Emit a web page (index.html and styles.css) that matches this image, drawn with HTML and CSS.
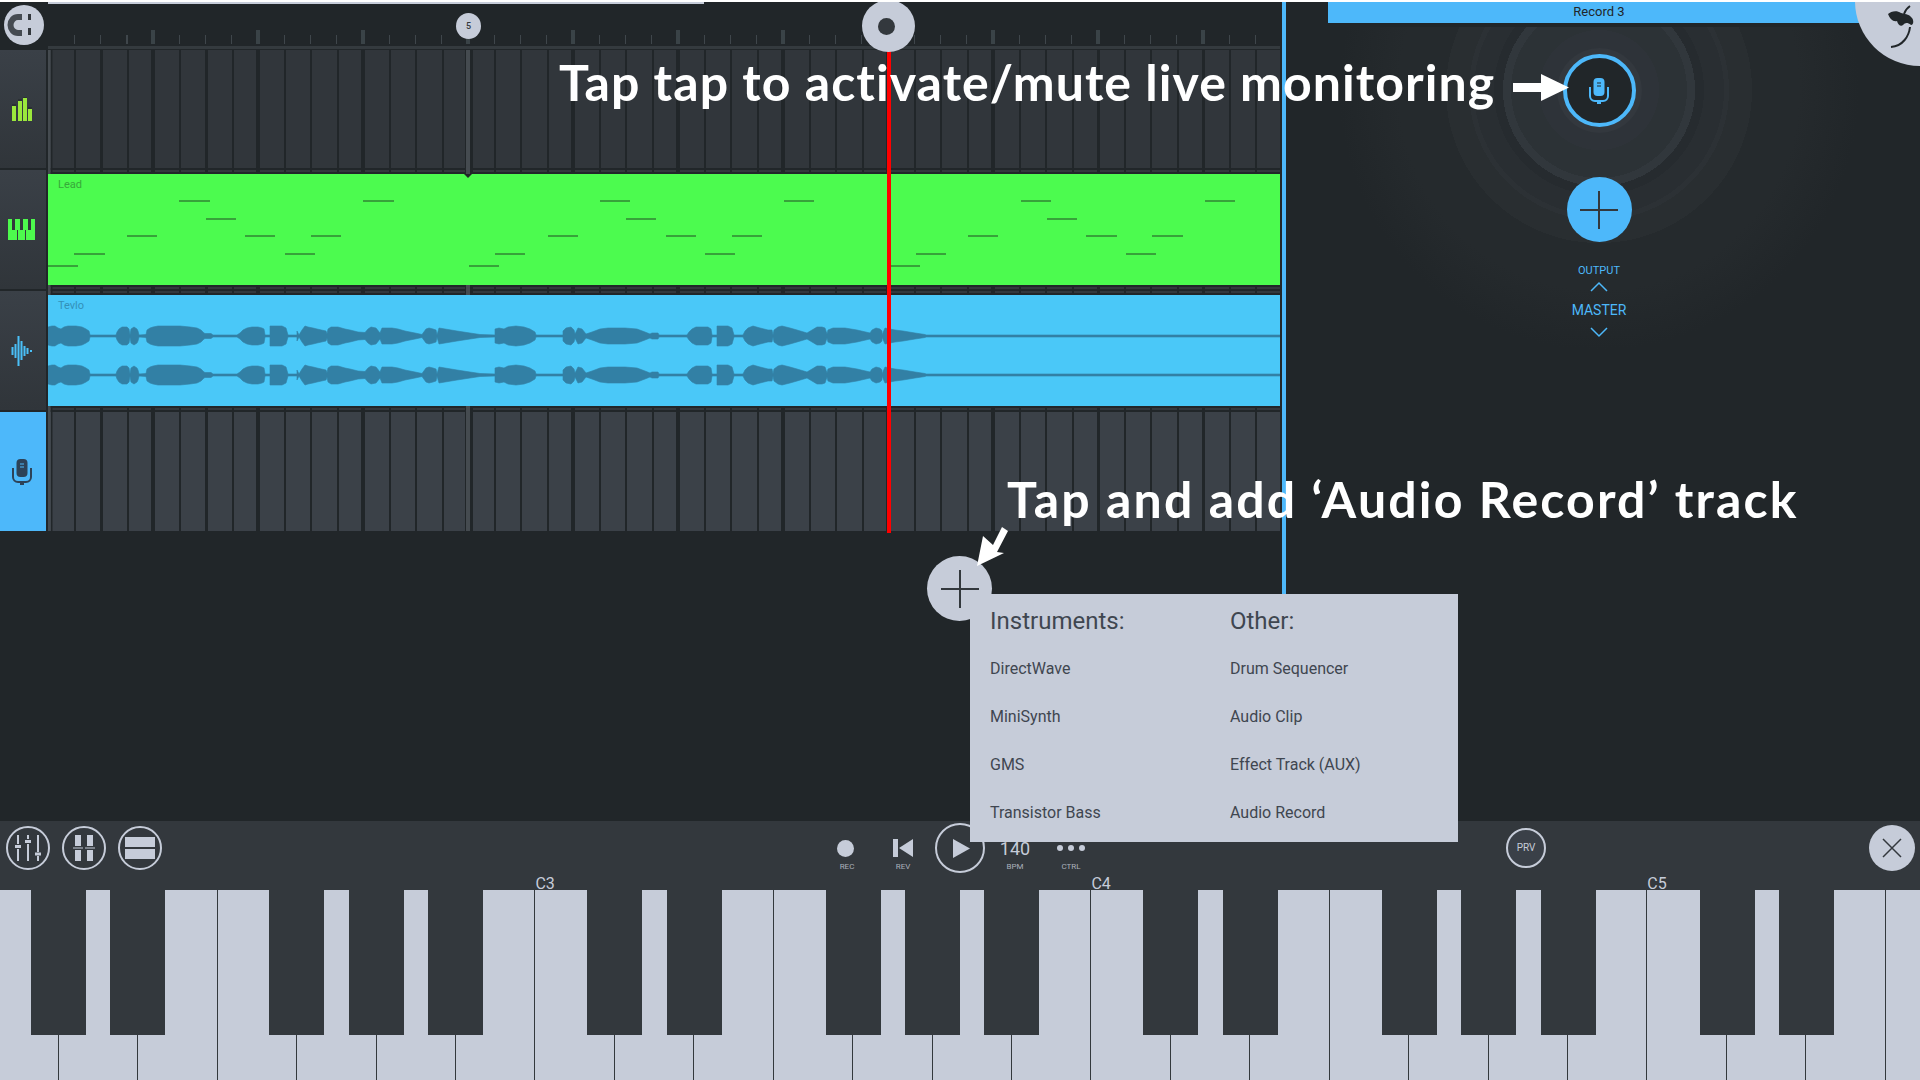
FILE: index.html
```html
<!DOCTYPE html>
<html>
<head>
  <title>FL Studio Mobile - Audio Record</title>
  <link rel="stylesheet" href="styles.css">
</head>
<body>
  <div class="top-strip"></div>

  <div class="workspace">
    <div class="arrange">
      <div class="header">
        <div class="snap-cell">
          <div class="snap-btn">
            <svg width="40" height="40" viewBox="0 0 40 40">
              <path d="M18 12H14A7.5 8 0 0 0 14 28H18" fill="none" stroke="#454b52" stroke-width="6"/>
              <rect x="24" y="9" width="3" height="6" fill="#33383d"/>
              <rect x="24" y="23" width="3" height="7" fill="#33383d"/>
            </svg>
          </div>
        </div>
        <div class="ruler">
          <div class="loop-strip"></div>
          <div class="bar-marker">5</div>
        </div>
      </div>

      <div class="tracks">
        <div class="track-heads">
          <div class="track-head first">
            <svg width="22" height="24" viewBox="0 0 22 24">
              <path d="M1 9h4v15H1zM7 4h4v20H7zM12 1h4v23h-4zM17 12h4v12h-4z" fill="#9be83c"/>
              <path d="M1 8h4M7 3h4M12 0h4M17 11h4" stroke="#212629" stroke-width="1"/>
            </svg>
          </div>
          <div class="track-head">
            <svg width="27" height="21" viewBox="0 0 27 21">
              <rect width="27" height="21" fill="#4dfa4d"/>
              <path d="M4 0h3v11H4zM12 0h3v11h-3zM20 0h3v11h-3z" fill="#33383d"/>
              <path d="M9.500 11v10M17.500 11v10" stroke="#33383d"/>
            </svg>
          </div>
          <div class="track-head">
            <svg width="22" height="30" viewBox="0 0 22 30">
              <path d="M1.500 11v8M4.500 8v14M7.500 0v30M10.500 5v19M13.500 10v10M16.500 12v6M20 14v2" stroke="#4ac0f8" stroke-width="2" fill="none"/>
            </svg>
          </div>
          <div class="track-head selected">
            <svg width="20" height="26" viewBox="0 0 20 26">
              <rect x="4.500" y="0" width="11" height="18" rx="4" fill="#2c4258"/>
              <path d="M8 5h4M8 8h4" stroke="#4db8fa"/>
              <path d="M1 9v9a5 5 0 0 0 5 5h8a5 5 0 0 0 5-5V9" fill="none" stroke="#2c4258" stroke-width="2"/>
              <rect x="8" y="23" width="4" height="3" fill="#2c4258"/>
            </svg>
          </div>
        </div>

        <div class="lanes">
          <div class="lane lane-top"></div>

          <div class="clip clip-lead">
            <span class="clip-name">Lead</span>
            <svg class="clip-art" viewBox="48 174 1232 111" width="1232" height="111">
              <g fill="#37a23a">
                <rect x="179" y="200" width="31" height="2"/><rect x="363" y="200" width="31" height="2"/>
                <rect x="600" y="200" width="30" height="2"/><rect x="784" y="200" width="30" height="2"/>
                <rect x="1021" y="200" width="30" height="2"/><rect x="1205" y="200" width="30" height="2"/>
                <rect x="206" y="218" width="30" height="2"/><rect x="626" y="218" width="30" height="2"/>
                <rect x="1047" y="218" width="30" height="2"/>
                <rect x="127" y="235" width="30" height="2"/><rect x="245" y="235" width="30" height="2"/>
                <rect x="311" y="235" width="30" height="2"/><rect x="548" y="235" width="30" height="2"/>
                <rect x="666" y="235" width="30" height="2"/><rect x="732" y="235" width="30" height="2"/>
                <rect x="968" y="235" width="30" height="2"/><rect x="1086" y="235" width="31" height="2"/>
                <rect x="1152" y="235" width="31" height="2"/>
                <rect x="74" y="253" width="31" height="2"/><rect x="285" y="253" width="30" height="2"/>
                <rect x="495" y="253" width="30" height="2"/><rect x="705" y="253" width="30" height="2"/>
                <rect x="916" y="253" width="30" height="2"/><rect x="1126" y="253" width="30" height="2"/>
                <rect x="48" y="265" width="30" height="2"/><rect x="469" y="265" width="30" height="2"/>
                <rect x="889" y="265" width="31" height="2"/>
              </g>
            </svg>
            <div class="marker-tip"></div>
          </div>

          <div class="lane lane-gap"></div>

          <div class="clip clip-audio">
            <span class="clip-name">Tevlo</span>
            <svg class="clip-art" viewBox="48 295 1232 111" width="1232" height="111">
              <defs>
                <path id="waveHalf" d="M48 0L48-9 52-10 55-10 58-8 61-7 64-9 68-10 76-10 82-9 86-7 89-5 90-1 116-1 117-4 119-7 122-9 127-9 129-7 130-1 131-7 134-9 137-7 138-5 139-1 146-1.500 147-6 150-8 153-9 158-10 170-10 180-10 190-9 197-8 201-6 204-3 205-2.500 211-2.500 213-1 237-1 240-3 243-6 247-8 252-9 258-9 262-8 264-7 265-1 270-1 270-10 282-10 286-8 288-1 297-1 297-5 299-1 302-6 305-10 308-9 313-8 317-7 326-5 327-2 328-7 331-9 338-9 345-7 350-6 358-4 365-3.500 368-7 371-9 376-8 380-3 382-8 392-8 398-7 405-5 415-3 422-1.500 426-7 429-8 433-7 436-6 437-1 439-8 445-7 457-5 470-3 480-1.500 495-1 495-7 499-8 504-7 508-9 516-10 524-9 530-7 535-4 536-1 563-1 563-5 566-8 571-9 574-6 575-2 578-8 582-7 586-2 592-4 600-7 608-8 625-8 637-7 645-4 650-2 652-3 658-3 659-1 687-1 689-4 692-7 696-9 708-9 711-7 712-1 717-1 717-10 728-10 732-8 734-1 743-1 745-5 748-8 753-10 760-8 768-6 772-6 773-1 774-6 778-9 782-10 790-8 797-6 807-3 812-6 817-9 822-9 825-8 827-2 828-6 833-8 845-8 857-6 870-3 872-6 876-8 880-7 882-5 882-1 885-8 895-6 903-5 915-3 925-1.500 926-1 1280-1 1280 0Z"/>
              </defs>
              <g fill="#3280a5" stroke="#3280a5" stroke-width="0.600">
                <use href="#waveHalf" y="336"/>
                <use href="#waveHalf" transform="translate(0 336) scale(1 -1)"/>
                <use href="#waveHalf" y="375"/>
                <use href="#waveHalf" transform="translate(0 375) scale(1 -1)"/>
              </g>
            </svg>
          </div>

          <div class="lane lane-bottom"></div>
        </div>
      </div>

      <div class="add-track-btn">
        <svg width="38" height="38" viewBox="0 0 38 38"><path d="M19 0V38M0 19H38" stroke="#33383d" stroke-width="2"/></svg>
      </div>

      <div class="lane-flag"></div>
    </div>

    <div class="inspector">
      <div class="record-bar">Record 3</div>
      <div class="fruit-corner">
        <svg width="80" height="70" viewBox="0 0 80 70">
          <path d="M47 14C50 11 56 10 60 13 63 14 68 14 70 17 73 19 73 25 70 25 66 22 64 23 62 25 60 27 57 25 56 21 52 22 49 19 47 14Z" fill="#212629"/>
          <path d="M69 6C66 8 64 11 63 14M69 27C68 36 62 46 50 47" fill="none" stroke="#212629" stroke-width="2"/>
        </svg>
      </div>
      <div class="inspector-body">
        <div class="monitor-btn">
          <div class="monitor-ring">
            <svg width="20" height="26" viewBox="0 0 20 26">
              <rect x="4.500" y="0" width="11" height="18" rx="4" fill="#4db8fa"/>
              <path d="M8 5h4M8 8h4" stroke="#212629"/>
              <path d="M1 9v9a5 5 0 0 0 5 5h8a5 5 0 0 0 5-5V9" fill="none" stroke="#4db8fa" stroke-width="2"/>
              <rect x="8" y="23" width="4" height="3" fill="#4db8fa"/>
            </svg>
          </div>
        </div>
        <div class="add-effect-btn">
          <svg width="38" height="38" viewBox="0 0 38 38"><path d="M19 0V38M0 19H38" stroke="#33383d" stroke-width="2"/></svg>
        </div>
        <div class="output-label">OUTPUT</div>
        <svg class="chevron" width="18" height="11" viewBox="0 0 18 11"><path d="M1 10L9 2 17 10" fill="none" stroke="#4db8fa" stroke-width="1.500"/></svg>
        <div class="output-value">MASTER</div>
        <svg class="chevron" width="18" height="11" viewBox="0 0 18 11"><path d="M1 1L9 9 17 1" fill="none" stroke="#4db8fa" stroke-width="1.500"/></svg>
      </div>
    </div>
  </div>

  <div class="control-bar">
    <div class="view-btns">
      <div class="round-btn">
        <svg width="28" height="26" viewBox="0 0 28 26">
          <path d="M4 0v9M4 14v12M14 0v4M14 9v17M24 0v17M24 21v5" stroke="#c6ccd9" stroke-width="2"/>
          <path d="M1 11.500h6M11 6.500h6M21 19h6" stroke="#c6ccd9" stroke-width="3"/>
        </svg>
      </div>
      <div class="round-btn">
        <svg width="22" height="26" viewBox="0 0 22 26">
          <path d="M2 0h6v11H2zM14 0h6v11h-6zM2 15h6v11H2zM14 15h6v11h-6z" fill="#c6ccd9"/>
          <path d="M0 13h10M12 13h10" stroke="#c6ccd9"/>
        </svg>
      </div>
      <div class="round-btn">
        <svg width="30" height="22" viewBox="0 0 30 22"><path d="M0 0h30v10H0zM0 12h30v10H0z" fill="#c6ccd9"/></svg>
      </div>
    </div>

    <div class="transport">
      <div class="transport-item">
        <div class="transport-icon rec-icon"><div class="rec-dot"></div></div>
        <span class="transport-label">REC</span>
      </div>
      <div class="transport-item">
        <div class="transport-icon">
          <svg width="20" height="18" viewBox="0 0 20 18"><path d="M0 0h5v18H0zM6 9L20 0V18Z" fill="#c6ccd9"/></svg>
        </div>
        <span class="transport-label">REV</span>
      </div>
      <div class="transport-item">
        <div class="transport-icon">
          <div class="play-btn">
            <svg width="17" height="19" viewBox="0 0 17 19"><path d="M0 0L17 9.500 0 19Z" fill="#c6ccd9"/></svg>
          </div>
        </div>
      </div>
      <div class="transport-item">
        <div class="transport-icon bpm-value">140</div>
        <span class="transport-label">BPM</span>
      </div>
      <div class="transport-item">
        <div class="transport-icon">
          <svg width="28" height="6" viewBox="0 0 28 6"><circle cx="3" cy="3" r="3" fill="#c6ccd9"/><circle cx="14" cy="3" r="3" fill="#c6ccd9"/><circle cx="25" cy="3" r="3" fill="#c6ccd9"/></svg>
        </div>
        <span class="transport-label">CTRL</span>
      </div>
    </div>

    <div class="prv-btn">PRV</div>
    <div class="close-btn">
      <svg width="20" height="20" viewBox="0 0 20 20"><path d="M1 1L19 19M19 1L1 19" stroke="#33383d" stroke-width="1.500"/></svg>
    </div>
  </div>

  <div class="keyboard">
    <div class="white-keys">
      <div class="white-key"></div><div class="white-key"></div><div class="white-key"></div><div class="white-key"></div>
      <div class="white-key"></div><div class="white-key"></div><div class="white-key"></div>
      <div class="white-key"><span class="note-label">C3</span></div>
      <div class="white-key"></div><div class="white-key"></div><div class="white-key"></div>
      <div class="white-key"></div><div class="white-key"></div><div class="white-key"></div>
      <div class="white-key"><span class="note-label">C4</span></div>
      <div class="white-key"></div><div class="white-key"></div><div class="white-key"></div>
      <div class="white-key"></div><div class="white-key"></div><div class="white-key"></div>
      <div class="white-key"><span class="note-label">C5</span></div>
      <div class="white-key"></div><div class="white-key"></div><div class="white-key"></div>
    </div>
    <div class="black-keys">
      <div class="black-key"></div><div class="black-key wide"></div><div class="black-key"></div><div class="black-key"></div><div class="black-key wide"></div>
      <div class="black-key"></div><div class="black-key wide"></div><div class="black-key"></div><div class="black-key"></div><div class="black-key wide"></div>
      <div class="black-key"></div><div class="black-key wide"></div><div class="black-key"></div><div class="black-key"></div><div class="black-key wide"></div>
      <div class="black-key"></div><div class="black-key"></div>
    </div>
  </div>

  <!-- stuff that sits on top of everything -->
  <div class="playhead"></div>
  <div class="playhead-knob"><div class="playhead-dot"></div></div>

  <div class="add-menu">
    <div class="menu-col">
      <div class="menu-title">Instruments:</div>
      <div class="menu-item">DirectWave</div>
      <div class="menu-item">MiniSynth</div>
      <div class="menu-item">GMS</div>
      <div class="menu-item">Transistor Bass</div>
    </div>
    <div class="menu-col">
      <div class="menu-title">Other:</div>
      <div class="menu-item">Drum Sequencer</div>
      <div class="menu-item">Audio Clip</div>
      <div class="menu-item">Effect Track (AUX)</div>
      <div class="menu-item">Audio Record</div>
    </div>
  </div>

  <div class="caption caption-monitor">Tap tap to activate/mute live monitoring</div>
  <div class="caption caption-add">Tap and add ‘Audio Record’ track</div>

  <svg class="callouts" width="1920" height="1080" viewBox="0 0 1920 1080">
    <path d="M1513 83H1541V74L1569 87.500 1541 101V92H1513Z" fill="#fff"/>
    <path d="M977 566L983 536 993 545 1002 527 1008 531 997 552 1004 553Z" fill="#fff"/>
  </svg>
</body>
</html>
```

FILE: styles.css
```css
html, body {
  margin: 0;
  padding: 0;
}

body {
  position: relative;
  width: 1920px;
  height: 1080px;
  overflow: hidden;
  background-color: #212629;
  font-family: Roboto, "Liberation Sans", sans-serif;
  color: #c6ccd9;
}

svg {
  display: block;
}

.top-strip {
  height: 2px;
  background-color: #fff;
}

.workspace {
  display: flex;
  height: 819px;
}

/* arrangement */
.arrange {
  position: relative;
  width: 1286px;
  flex: none;
  box-sizing: border-box;
  border-right: 4px solid #4db8fa;
}

.header {
  display: flex;
  height: 48px;
}

.snap-cell {
  width: 48px;
  flex: none;
  padding: 3px 0 0 4px;
  box-sizing: border-box;
}

.snap-btn {
  width: 40px;
  height: 40px;
  border-radius: 50%;
  background-color: #c6ccd9;
}

.ruler {
  position: relative;
  width: 1232px;
  flex: none;
  background:
    linear-gradient(#343a3e, #343a3e) 0 44px / 100% 3px no-repeat,
    repeating-linear-gradient(90deg, #3a4347 0 4px, transparent 4px 105px) 103px 28px / 100% 14px no-repeat,
    repeating-linear-gradient(90deg, #3f464b 0 1px, transparent 1px 26.25px) 26px 33px / 100% 9px no-repeat;
}

.loop-strip {
  width: 656px;
  height: 2px;
  background-color: #c6ccd9;
}

.bar-marker {
  position: absolute;
  left: 408px;
  top: 11px;
  width: 25px;
  height: 26px;
  border-radius: 50%;
  background-color: #c6ccd9;
  color: #33383d;
  font-size: 9px;
  font-weight: 500;
  line-height: 26px;
  text-align: center;
}

.tracks {
  display: flex;
}

.track-heads {
  display: grid;
  grid-template-rows: 118px 119px 119px 119px;
  row-gap: 2px;
  width: 46px;
  margin-right: 2px;
  flex: none;
}

.track-head {
  display: flex;
  align-items: center;
  justify-content: center;
  padding-right: 3px;
  background: linear-gradient(#3a4047, #30353a);
}

.track-head.selected {
  background: #4db8fa;
}

.lanes {
  width: 1232px;
  flex: none;
}

/* beat lines, bar lines, and the two lighter markers */
.lane {
  --grid:
    linear-gradient(#454b50, #454b50) 0 0 / 2.5px 100% no-repeat,
    linear-gradient(#454b50, #454b50) 418px 0 / 4px 100% no-repeat,
    linear-gradient(#212629, #212629) 2.5px 0 / 1.5px 100% no-repeat,
    linear-gradient(#212629, #212629) 416.5px 0 / 8px 100% no-repeat,
    repeating-linear-gradient(90deg, #212629 0 1.5px, transparent 1.5px 103.5px, #212629 103.5px 105px),
    repeating-linear-gradient(90deg, #212629 0 2px, transparent 2px 26.25px);
}

.lane-top {
  height: 124px;
  background: var(--grid), linear-gradient(#31363b 0 118px, #212629 118px 120px, #33383d 120px 122px, #212629 122px);
}

.lane-gap {
  height: 10px;
  background: var(--grid), linear-gradient(#212629 0 2px, #33383d 2px 4px, #212629 4px 6px, #33383d 6px 8px, #212629 8px);
}

.lane-bottom {
  height: 125px;
  background: var(--grid), linear-gradient(#212629 0 2px, #33383d 2px 4px, #212629 4px 6px, #3b4148 6px);
}

.clip {
  position: relative;
  height: 111px;
}

.clip-lead {
  background-color: #4cfb4f;
  color: #37a73a;
}

.clip-audio {
  background-color: #4ac8f8;
  color: #3390b8;
}

.clip-name {
  position: absolute;
  left: 10px;
  top: 4px;
  font-size: 11px;
  line-height: 13px;
}

.marker-tip {
  position: absolute;
  left: 416px;
  top: 0;
  border-left: 4px solid transparent;
  border-right: 4px solid transparent;
  border-top: 4px solid #212629;
}

.add-track-btn {
  display: flex;
  align-items: center;
  justify-content: center;
  width: 65px;
  height: 65px;
  margin: 25px 0 0 927px;
  border-radius: 50%;
  background-color: #c6ccd9;
}

.lane-flag {
  position: absolute;
  left: 100%;
  top: 378px;
  margin-left: 4px;
  border-top: 15px solid transparent;
  border-bottom: 15px solid transparent;
  border-left: 15px solid #4db8fa;
}

/* right panel */
.inspector {
  position: relative;
  flex: 1;
  overflow: hidden;
  padding-right: 8px;
}

.record-bar {
  width: 542px;
  height: 21px;
  margin-left: 42px;
  background-color: #4db8fa;
  color: #212629;
  font-size: 13px;
  line-height: 20px;
  text-align: center;
}

.fruit-corner {
  position: absolute;
  left: 569px;
  top: -66px;
  width: 130px;
  height: 130px;
  border-radius: 50%;
  background-color: #c6ccd9;
}

.fruit-corner svg {
  position: absolute;
  left: -14px;
  top: 64px;
}

.inspector-body {
  display: flex;
  flex-direction: column;
  align-items: center;
  margin-top: 4px;
  height: 790px;
  background: radial-gradient(circle at 50% 63px,
    #2e3339 0 60px, #2c3236 60px 88px, #31373c 88px 96px, #262b2f 96px 105px,
    #292e32 105px 125px, #2c3135 125px 130px, #292e31 130px 153px, #252a2d 153px 200px, #212629 260px);
}

.monitor-btn {
  display: flex;
  align-items: center;
  justify-content: center;
  width: 85px;
  height: 85px;
  margin-top: 21px;
  border-radius: 50%;
  background-color: #33383e;
}

.monitor-ring {
  display: flex;
  align-items: center;
  justify-content: center;
  box-sizing: border-box;
  width: 73px;
  height: 73px;
  border: 4px solid #4db8fa;
  border-radius: 50%;
  background-color: #212629;
}

.add-effect-btn {
  display: flex;
  align-items: center;
  justify-content: center;
  width: 65px;
  height: 65px;
  margin-top: 44px;
  border-radius: 50%;
  background-color: #4db8fa;
}

.output-label {
  margin-top: 22px;
  color: #4db8fa;
  font-size: 11px;
  line-height: 14px;
}

.chevron {
  margin-top: 3px;
}

.output-value {
  margin-top: 10px;
  color: #4db8fa;
  font-size: 14px;
  line-height: 16px;
}

.output-value + .chevron {
  margin-top: 9px;
}

/* bottom controls */
.control-bar {
  display: flex;
  align-items: flex-start;
  height: 69px;
  background-color: #33383d;
}

.view-btns {
  display: flex;
  gap: 12px;
  margin: 5px 0 0 6px;
}

.round-btn {
  display: flex;
  align-items: center;
  justify-content: center;
  box-sizing: border-box;
  width: 44px;
  height: 44px;
  border: 2px solid #c6ccd9;
  border-radius: 50%;
}

.transport {
  display: flex;
  margin-left: 657px;
  padding-top: 15px;
}

.transport-item {
  display: flex;
  flex-direction: column;
  align-items: center;
  width: 56px;
}

.transport-icon {
  display: flex;
  align-items: center;
  justify-content: center;
  height: 24px;
}

.rec-icon {
  margin-right: 3px;
}

.transport-label {
  margin-top: 2px;
  color: #aab0bb;
  font-size: 8px;
  line-height: 10px;
}

.rec-dot {
  width: 17px;
  height: 17px;
  border-radius: 50%;
  background-color: #c6ccd9;
}

.play-btn {
  display: flex;
  flex: none;
  align-items: center;
  justify-content: center;
  box-sizing: border-box;
  width: 50px;
  height: 50px;
  margin-left: 1px;
  padding-left: 3px;
  border: 2px solid #c6ccd9;
  border-radius: 50%;
}

.bpm-value {
  font-size: 18px;
}

.prv-btn {
  box-sizing: border-box;
  width: 40px;
  height: 40px;
  margin: 7px 0 0 407px;
  border: 2px solid #c6ccd9;
  border-radius: 50%;
  background-color: #3a4048;
  font-size: 10px;
  line-height: 36px;
  text-align: center;
}

.close-btn {
  display: flex;
  align-items: center;
  justify-content: center;
  width: 46px;
  height: 46px;
  margin: 4px 5px 0 auto;
  border-radius: 50%;
  background-color: #c6ccd9;
}

/* keyboard */
.keyboard {
  position: relative;
  height: 190px;
}

.white-keys {
  display: flex;
  height: 100%;
  margin-left: -20.500px;
}

.white-key {
  position: relative;
  flex: 0 0 79.430px;
  box-sizing: border-box;
  border-right: 1px solid #33383d;
  background-color: #c6ccd9;
}

.note-label {
  position: absolute;
  left: 0;
  bottom: calc(100% - 2px);
  font-size: 16px;
  line-height: 16px;
}

.black-keys {
  position: absolute;
  left: 31px;
  top: 0;
  display: flex;
}

.black-key {
  width: 55px;
  height: 145px;
  margin-right: 24.400px;
  flex: none;
  background-color: #33383d;
}

.black-key.wide {
  margin-right: 104px;
}

/* overlays */
.playhead {
  position: absolute;
  left: 887px;
  top: 50px;
  width: 4px;
  height: 483px;
  background-color: #f00;
}

.playhead-knob {
  position: absolute;
  left: 862px;
  top: 0;
  display: flex;
  align-items: center;
  justify-content: center;
  width: 53px;
  height: 52px;
  border-radius: 50%;
  background-color: #c6ccd9;
  clip-path: inset(2px 0 0 0);
}

.playhead-dot {
  width: 17px;
  height: 17px;
  margin-right: 5px;
  border-radius: 50%;
  background-color: #33383d;
}

.add-menu {
  position: absolute;
  left: 970px;
  top: 594px;
  display: flex;
  box-sizing: border-box;
  width: 488px;
  height: 248px;
  padding: 10px 0 0 20px;
  background-color: #c6ccd9;
  color: #3f4650;
}

.menu-col {
  flex: none;
  width: 240px;
}

.menu-title {
  font-size: 24px;
  line-height: 34px;
}

.menu-item {
  height: 48px;
  font-size: 16px;
  line-height: 48px;
}

.menu-title + .menu-item {
  margin-top: 7px;
}

.caption {
  position: absolute;
  color: #fff;
  font-family: Lato, "Liberation Sans", sans-serif;
  font-weight: 700;
  font-size: 50px;
  line-height: 60px;
  white-space: nowrap;
}

.caption-monitor {
  left: 559px;
  top: 52px;
  letter-spacing: 1.050px;
}

.caption-add {
  left: 1007px;
  top: 469px;
  letter-spacing: 2.150px;
}

.callouts {
  position: absolute;
  left: 0;
  top: 0;
}
```
